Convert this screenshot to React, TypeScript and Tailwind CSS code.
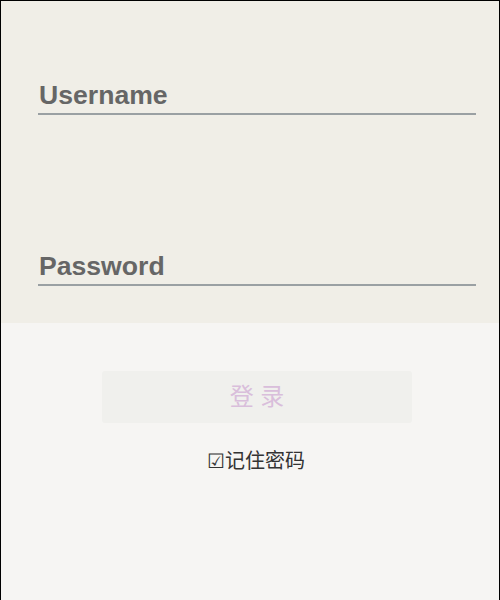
import React from "react";

export default function App() {
  return (
    <div
      className="w-[500px] h-[620px] border border-black bg-[#f6f5f3]"
      style={{ fontFamily: '"Liberation Sans", "Noto Sans CJK SC", sans-serif' }}
    >
      <div className="h-[322px] bg-[#f0eee7] pl-[37px] pr-[23px] pt-[79px]">
        <div className="h-[35px] pl-[1px] border-b-2 border-[#9aa0a3] text-[26.6px] leading-[30px] font-bold text-[#666666]">
          Username
        </div>
        <div className="mt-[136px] h-[35px] pl-[1px] border-b-2 border-[#9aa0a3] text-[26.6px] leading-[30px] font-bold text-[#666666]">
          Password
        </div>
      </div>
      <div className="flex flex-col items-center pt-[48px]">
        <div className="ml-[14px] w-[310px] h-[52px] rounded-[3px] bg-[#f0f0ed] flex items-center justify-center text-[24px] text-[#d9bedb]">
          登 录
        </div>
        <div className="mt-[24px] ml-[12px] text-[20px] leading-[28px] text-[#333333]">☑记住密码</div>
      </div>
    </div>
  );
}
